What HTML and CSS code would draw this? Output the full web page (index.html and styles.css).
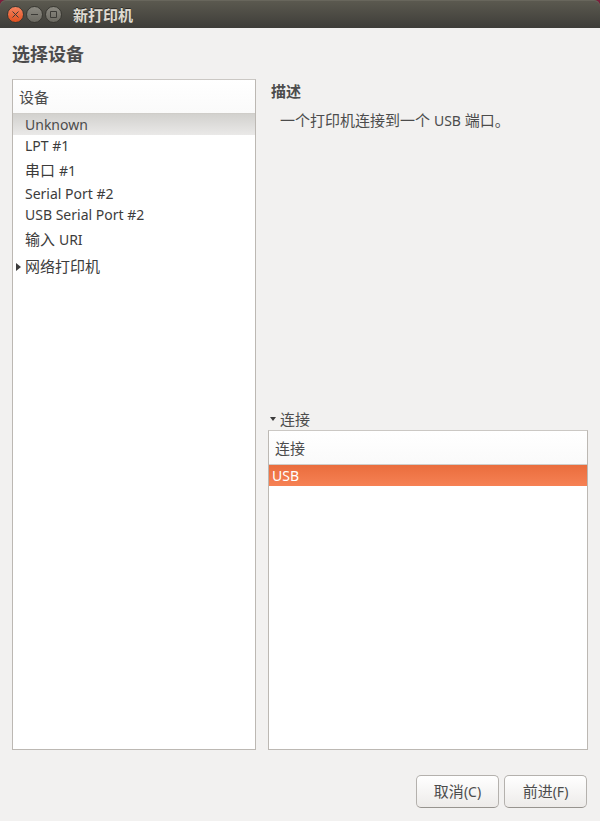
FILE: index.html
```html
<!DOCTYPE html>
<html lang="zh-CN">
<head>
<meta charset="utf-8">
<meta name="viewport" content="width=device-width, initial-scale=1">
<title>新打印机</title>
<link rel="stylesheet" href="styles.css">
</head>
<body>
<div class="window">
  <header class="titlebar">
    <div class="controls">
      <button class="control close" type="button" aria-label="关闭"><svg viewBox="0 0 17 17"><path d="M5.500 5.500l6 6M11.500 5.500l-6 6"/></svg></button>
      <button class="control" type="button" aria-label="最小化"><svg viewBox="0 0 17 17"><path d="M5 8.500h7"/></svg></button>
      <button class="control" type="button" aria-label="最大化"><svg viewBox="0 0 17 17"><path d="M5.500 5.500h6v6h-6z"/></svg></button>
    </div>
    <span class="title">新打印机</span>
  </header>
  <main class="content">
    <h1>选择设备</h1>
    <div class="panes">
      <section class="list devices">
        <table>
          <thead><tr><th scope="col">设备</th></tr></thead>
          <tbody>
            <tr class="inactive"><td class="latin">Unknown</td></tr>
            <tr><td class="latin">LPT #1</td></tr>
            <tr><td>串口 <span class="latin">#1</span></td></tr>
            <tr><td class="latin">Serial Port #2</td></tr>
            <tr><td class="latin">USB Serial Port #2</td></tr>
            <tr><td>输入 <span class="latin">URI</span></td></tr>
            <tr><td class="branch"><button class="expander" type="button" aria-expanded="false"><svg class="arrow" viewBox="0 0 5 8"><path d="M0 0l5 4-5 4z"/></svg>网络打印机</button></td></tr>
          </tbody>
        </table>
      </section>
      <div class="side">
        <section class="description">
          <h2>描述</h2>
          <p>一个打印机连接到一个 <span class="latin">USB</span> 端口。</p>
        </section>
        <details open>
          <summary><svg class="caret" viewBox="0 0 6 4"><path d="M0 0h6l-3 4z"/></svg>连接</summary>
          <div class="list connections">
            <table>
              <thead><tr><th scope="col">连接</th></tr></thead>
              <tbody><tr class="selected"><td class="latin">USB</td></tr></tbody>
            </table>
          </div>
        </details>
      </div>
    </div>
    <footer class="actions">
      <button class="button" type="button">取消<span class="latin">(C)</span></button>
      <button class="button" type="button">前进<span class="latin">(F)</span></button>
    </footer>
  </main>
</div>
</body>
</html>
```
FILE: styles.css
```css
* {
  box-sizing: border-box;
}

body {
  margin: 0;
  background: #f2f1f0;
  color: #4c4c4c;
  font: 15px/24px "Noto Sans", "Noto Sans CJK SC", sans-serif;
}

h1, h2, p {
  margin: 0;
}

button {
  margin: 0;
  padding: 0;
  border: 0;
  color: inherit;
  font: inherit;
}

.latin {
  font-size: 14px;
}

.window {
  display: flex;
  flex-direction: column;
  min-height: 100vh;
  background: #7c1f3c;
}

.titlebar {
  display: flex;
  align-items: center;
  gap: 11px;
  height: 28px;
  padding: 0 7px;
  border-radius: 6px 6px 0 0;
  background: linear-gradient(#5c5a50, #3e3d39);
  box-shadow: inset 0 1px #68665c;
  color: #dfdbd2;
}

.controls {
  display: flex;
  gap: 2px;
}

.control {
  width: 17px;
  height: 17px;
  border: 1px solid #393832;
  border-radius: 50%;
  background: linear-gradient(#8b8981, #6c6a62);
}

.control svg {
  display: block;
  width: 17px;
  height: 17px;
  margin: -1px;
  fill: none;
  stroke: #3c3b37;
}

.close {
  background: linear-gradient(#f5835f, #e0501f);
}

.title {
  padding-top: 2px;
  font-weight: 700;
  text-shadow: 0 -1px #2d2c28;
}

.content {
  display: flex;
  flex: 1;
  flex-direction: column;
  padding: 13px 12px;
  background: #f2f1f0;
}

h1 {
  margin-bottom: 11px;
  font-size: 18px;
  line-height: 27px;
}

.panes {
  display: grid;
  flex: 1;
  grid-template-columns: 244fr 320fr;
  gap: 12px;
}

.list {
  border: 1px solid #bcb8b3;
  border-top-color: #cbc8c4;
  background: #fff;
}

table {
  width: 100%;
  border-collapse: separate;
  border-spacing: 0;
}

th {
  height: 34px;
  padding: 0 6px;
  border-bottom: 1px solid #cfcdc9;
  background: linear-gradient(#fff, #fafafa);
  font-weight: 400;
  text-align: left;
}

td {
  height: 27px;
  padding: 2px 3px 0;
  color: #3c3c3c;
  line-height: 25px;
}

td.latin {
  height: 21px;
  padding-top: 0;
  line-height: 21px;
}

.devices td {
  padding-left: 12px;
}

.devices .branch {
  padding-left: 3px;
}

.inactive {
  background: linear-gradient(#d2d1ce, #eae9e8);
}

.inactive td {
  color: #4c4c4c;
}

.expander {
  display: flex;
  align-items: center;
  gap: 4px;
  background: none;
}

.arrow {
  width: 5px;
  height: 8px;
}

.caret {
  width: 6px;
  height: 4px;
}

.arrow, .caret {
  fill: #3c3c3c;
}

.side {
  display: flex;
  flex-direction: column;
  justify-content: space-between;
}

h2 {
  padding-left: 3px;
  font-size: 15px;
}

.description p {
  padding: 5px 12px;
}

summary {
  display: flex;
  align-items: center;
  gap: 4px;
  padding-left: 2px;
  line-height: 22px;
  list-style: none;
}

.connections {
  min-height: 320px;
}

.selected {
  background: linear-gradient(#ea6d3d, #f68154);
}

.selected td {
  color: #fff;
}

.actions {
  display: flex;
  justify-content: flex-end;
  gap: 5px;
  margin-top: 25px;
  padding-right: 1px;
}

.button {
  min-width: 83px;
  height: 33px;
  padding: 0 16px;
  border: 1px solid #b4b1ad;
  border-bottom-color: #97948f;
  border-radius: 5px;
  background: linear-gradient(#fff, #edebe9);
}
```
